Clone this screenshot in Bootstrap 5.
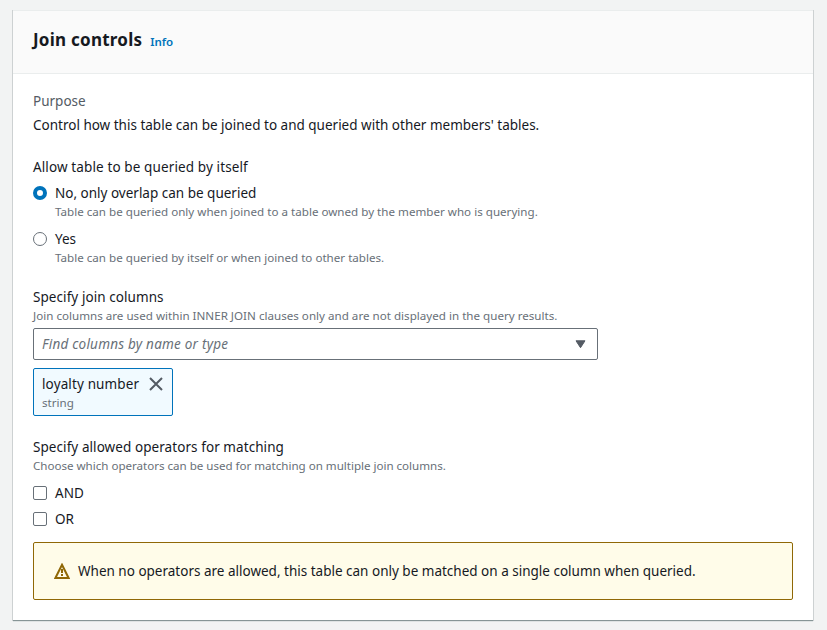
<!DOCTYPE html>
<html lang="en">
<head>
<meta charset="utf-8">
<meta name="viewport" content="width=device-width, initial-scale=1">
<title>Join controls</title>
<link rel="stylesheet" href="https://cdn.jsdelivr.net/npm/bootstrap@5.3.0/dist/css/bootstrap.min.css">
<style>
  body { background: #f2f3f3; color: #16191f; font: 13.5px/22px "Noto Sans", "Open Sans", sans-serif; padding: 10px 14px 9px 13px; }
  .panel { height: 611px; border: 0; border-top: 1px solid #eaeded; border-bottom: 1px solid #879596; border-radius: 0; color: inherit; box-shadow: 1px 0 0 0 #cdd1d2, -1px 0 0 0 #cdd1d2, 0 1px 0 0 #dfe3e3; }
  .panel-head { height: 63px; padding: 0 20px 4px; background: #fafafa; border-bottom: 1px solid #eaeded; }
  .panel-head h2 { font-size: 17px; line-height: 22px; font-weight: 700; letter-spacing: .24px; }
  .info { font-size: 11.5px; font-weight: 600; color: #0073bb; line-height: 22px; }
  .panel-main { padding: 16px 20px 0; }
  .key { color: #545b64; }
  .hint { font-size: 11.6px; line-height: 16px; color: #687078; letter-spacing: .01px; }
  .form-check-input.ctl { width: 14px; height: 14px; margin: 4px 8px 0 0; border-color: #687078; background-image: none; flex: none; float: none; }
  .ctl[type=checkbox] { border-radius: 2px; }
  .form-check-input.ctl[type=radio]:checked { background: #fff; border: 4px solid #0073bb; }
  .finder { width: 565px; height: 32px; padding: 0 11px 0 8px; border: 1px solid #687078; border-radius: 2px; color: #687078; font-style: italic; letter-spacing: .23px; }
  .chip { width: 140px; height: 48px; padding: 4px 8px; background: #f1faff; border: 1px solid #0073bb; border-radius: 2px; }
  .notice { height: 58px; padding: 0 20px; background: #fffce9; border: 1px solid #906806; border-radius: 2px; color: inherit; margin-top: 12px; }
  .g2 { margin-top: 2px; } .g3 { margin-top: 3px; } .g4 { margin-top: 4px; } .g20 { margin-top: 20px; }
  .fit-question { letter-spacing: .12px; }
  .fit-label { letter-spacing: .07px; }
  .fit-chip { letter-spacing: .13px; }
  .hint.fit-operators { letter-spacing: -.02px; }
</style>
<script src="https://cdn.jsdelivr.net/npm/bootstrap@5.3.0/dist/js/bootstrap.bundle.min.js" defer></script>
</head>
<body>
<main class="card panel">
  <header class="panel-head d-flex align-items-center">
    <h2 class="m-0">Join controls</h2><a class="info text-decoration-none ms-2 pt-1" href="#">Info</a>
  </header>
  <div class="panel-main">
    <div class="key">Purpose</div>
    <div class="g2">Control how this table can be joined to and queried with other members' tables.</div>
    <div class="g20 fit-question">Allow table to be queried by itself</div>
    <label class="d-flex g4"><input class="form-check-input ctl" type="radio" name="self" checked><span><span class="d-block">No, only overlap can be queried</span><span class="hint d-block">Table can be queried only when joined to a table owned by the member who is querying.</span></span></label>
    <label class="d-flex mt-2"><input class="form-check-input ctl" type="radio" name="self"><span><span class="d-block">Yes</span><span class="hint d-block">Table can be queried by itself or when joined to other tables.</span></span></label>
    <div class="g20 fit-label">Specify join columns</div>
    <div class="hint">Join columns are used within INNER JOIN clauses only and are not displayed in the query results.</div>
    <div class="finder g4 d-flex align-items-center justify-content-between"><span>Find columns by name or type</span>
      <svg width="11" height="9" viewBox="0 0 11 9"><path d="M1 .8h9L5.5 7.7z" fill="#545b64" stroke="#545b64" stroke-linejoin="round"/></svg></div>
    <div class="chip mt-2 d-flex justify-content-between"><div><div class="fit-chip">loyalty number</div><div class="hint">string</div></div>
      <svg width="16" height="16" viewBox="0 0 16 16" class="g3"><path d="M2 2l12 12M14 2L2 14" stroke="#545b64" stroke-width="2"/></svg></div>
    <div class="g20 fit-label">Specify allowed operators for matching</div>
    <div class="hint fit-operators">Choose which operators can be used for matching on multiple join columns.</div>
    <label class="d-flex mt-2"><input class="form-check-input ctl" type="checkbox"><span>AND</span></label>
    <label class="d-flex g4"><input class="form-check-input ctl" type="checkbox"><span>OR</span></label>
    <div class="notice d-flex align-items-center"><svg class="me-2" width="16" height="16" viewBox="0 0 16 16"><path d="M8 1.8L14.6 15H1.4z" fill="none" stroke="#906806" stroke-width="2"/><path d="M8 6v4M8 11v2" stroke="#906806" stroke-width="2"/></svg><span>When no operators are allowed, this table can only be matched on a single column when queried.</span></div>
  </div>
</main>
</body>
</html>
